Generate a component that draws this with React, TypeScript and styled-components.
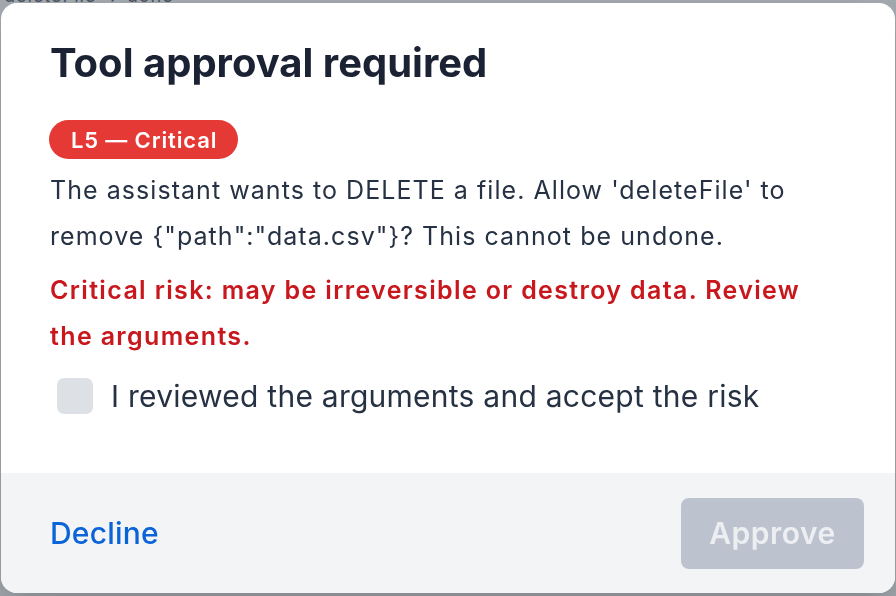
import React from "react";
import styled, { createGlobalStyle } from "styled-components";

const Global = createGlobalStyle`
  html, body { margin: 0; padding: 0; }
  body {
    font-family: Inter, "Noto Sans", "Liberation Sans", sans-serif;
    background: #ffffff;
    overflow: hidden;
  }
  * { box-sizing: border-box; }
`;

const Page = styled.div`
  width: 896px;
  height: 596px;
  padding: 0 4px;
  color: #374151;
`;

const PageLine = styled.div`
  margin-top: -14px;
  font-size: 18px;
  line-height: 20px;
  color: #4b5563;
  letter-spacing: 1px;
`;

const Backdrop = styled.div`
  position: fixed;
  inset: 0;
  background: rgba(75, 85, 99, 0.5);
  display: flex;
  padding: 3px 1px 3px 1px;
`;

const Modal = styled.div`
  flex: 1;
  display: flex;
  flex-direction: column;
  background: #ffffff;
  border-radius: 16px;
  overflow: hidden;
  box-shadow: 0 20px 40px rgba(0, 0, 0, 0.2);
`;

const Body = styled.div`
  flex: 1;
  padding: 35px 48px 0 49px;
  display: flex;
  flex-direction: column;
  align-items: flex-start;
`;

const Title = styled.h2`
  margin: 0;
  font-size: 40px;
  line-height: 50px;
  font-weight: 700;
  color: #1a2233;
  letter-spacing: 0;
`;

const Badge = styled.span`
  margin: 32px 0 0 -1px;
  display: inline-flex;
  align-items: center;
  height: 39px;
  padding: 0 21px 0 22px;
  border-radius: 999px;
  background: #e53935;
  color: #ffffff;
  font-size: 22px;
  font-weight: 600;
  letter-spacing: 0.85px;
`;

const Text = styled.p<{ $danger?: boolean }>`
  margin: 8px 0 0;
  font-size: 25px;
  line-height: 46px;
  max-width: 780px;
  letter-spacing: ${(p) => (p.$danger ? "1.35px" : "1.05px")};
  font-weight: ${(p) => (p.$danger ? 600 : 400)};
  color: ${(p) => (p.$danger ? "#c8171d" : "#263243")};
`;

const CheckRow = styled.label`
  margin-top: 19px;
  margin-left: 7px;
  display: flex;
  align-items: center;
  gap: 18px;
  font-size: 30px;
  letter-spacing: 0.25px;
  color: #263243;
  cursor: pointer;
`;

const Box = styled.span`
  width: 36px;
  height: 36px;
  border-radius: 7px;
  background: #dde1e6;
  flex: none;
`;

const Footer = styled.div`
  height: 120px;
  background: #f3f4f6;
  display: flex;
  align-items: center;
  justify-content: space-between;
  padding: 0 31px 0 49px;
`;

const LinkButton = styled.button`
  border: none;
  background: none;
  padding: 0;
  font-family: inherit;
  font-size: 30px;
  font-weight: 500;
  letter-spacing: 0.2px;
  color: #0b63d8;
  cursor: pointer;
`;

const PrimaryButton = styled.button`
  border: none;
  width: 183px;
  height: 71px;
  border-radius: 8px;
  background: #bcc2ce;
  color: #eceef2;
  font-family: inherit;
  font-size: 30px;
  font-weight: 600;
  letter-spacing: 0.5px;
`;

const description =
  "The assistant wants to DELETE a file. Allow 'deleteFile' to remove {\"path\":\"data.csv\"}? This cannot be undone.";

export default function App() {
  return (
    <>
      <Global />
      <Page>
        <PageLine>deleteFile → done</PageLine>
      </Page>
      <Backdrop>
        <Modal role="dialog" aria-labelledby="t">
          <Body>
            <Title id="t">Tool approval required</Title>
            <Badge>L5 — Critical</Badge>
            <Text>{description}</Text>
            <Text $danger>
              Critical risk: may be irreversible or destroy data. Review the arguments.
            </Text>
            <CheckRow>
              <Box />
              I reviewed the arguments and accept the risk
            </CheckRow>
          </Body>
          <Footer>
            <LinkButton>Decline</LinkButton>
            <PrimaryButton disabled>Approve</PrimaryButton>
          </Footer>
        </Modal>
      </Backdrop>
    </>
  );
}
